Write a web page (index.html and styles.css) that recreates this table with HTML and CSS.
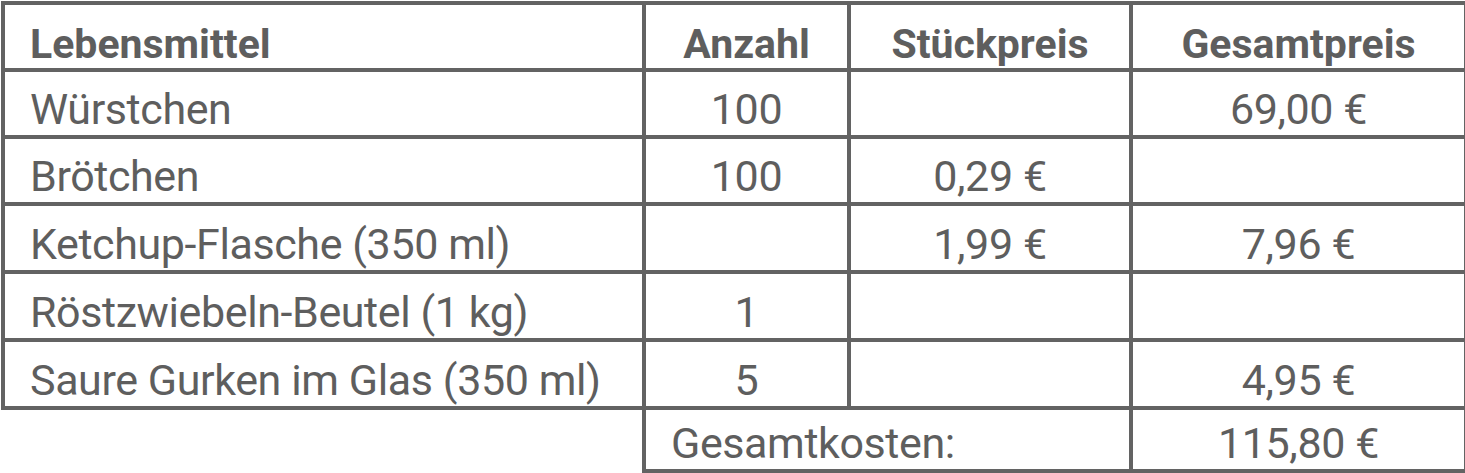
FILE: index.html
```html
<!DOCTYPE html>
<html lang="de">
<head>
  <meta charset="UTF-8" />
  <meta name="viewport" content="width=device-width, initial-scale=1.0"/>
  <title>Einkaufsliste Grillfest</title>
  <link rel="stylesheet" href="styles.css">
</head>
<body>
  <table class="price-table">
    <colgroup>
      <col class="col-name">
      <col class="col-count">
      <col class="col-unit">
      <col class="col-total">
    </colgroup>
    <thead>
      <tr class="row-head">
        <th class="cell-name">Lebensmittel</th>
        <th>Anzahl</th>
        <th>Stückpreis</th>
        <th>Gesamtpreis</th>
      </tr>
    </thead>
    <tbody>
      <tr class="row-a">
        <td class="cell-name">Würstchen</td>
        <td>100</td>
        <td></td>
        <td>69,00 €</td>
      </tr>
      <tr class="row-a">
        <td class="cell-name">Brötchen</td>
        <td>100</td>
        <td>0,29 €</td>
        <td></td>
      </tr>
      <tr class="row-b">
        <td class="cell-name">Ketchup-Flasche (350 ml)</td>
        <td></td>
        <td>1,99 €</td>
        <td>7,96 €</td>
      </tr>
      <tr class="row-b">
        <td class="cell-name">Röstzwiebeln-Beutel (1 kg)</td>
        <td>1</td>
        <td></td>
        <td></td>
      </tr>
      <tr class="row-b">
        <td class="cell-name">Saure Gurken im Glas (350 ml)</td>
        <td>5</td>
        <td></td>
        <td>4,95 €</td>
      </tr>
    </tbody>
    <tfoot>
      <tr class="row-sum">
        <td class="cell-empty"></td>
        <td class="cell-label" colspan="2">Gesamtkosten:</td>
        <td>115,80 €</td>
      </tr>
    </tfoot>
  </table>
</body>
</html>
```

FILE: styles.css
```css
body {
  margin: 0;
  padding: 1px 0 0 1px;
  background: #fff;
  font-family: Roboto, "Liberation Sans", sans-serif;
  color: #5e5e5e;
}

.price-table {
  border-collapse: collapse;
  table-layout: fixed;
  width: 1463px;
}

.col-name { width: 641px; }
.col-count { width: 205px; }
.col-unit { width: 282px; }
.col-total { width: 335px; }

.price-table th,
.price-table td {
  border: 4px solid #636363;
  padding: 0 25px 1px;
  text-align: center;
  vertical-align: bottom;
  white-space: nowrap;
}

.price-table th {
  font-size: 41px;
  font-weight: 700;
  padding-bottom: 0;
}

.price-table td {
  font-size: 43px;
  font-weight: 400;
  letter-spacing: -0.4px;
}

.price-table .cell-name,
.price-table .cell-label {
  text-align: left;
}

.row-head { height: 67px; }
.row-a { height: 67px; }
.row-b { height: 68px; }
.row-sum { height: 63px; }

.price-table .cell-empty {
  border-left: none;
  border-bottom: none;
}
```
